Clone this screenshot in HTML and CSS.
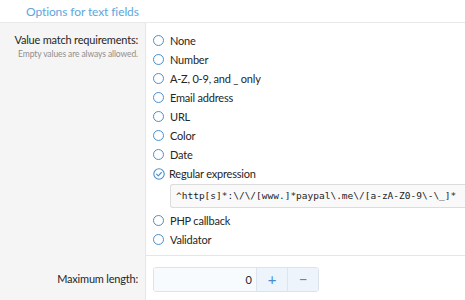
FILE: index.html
```html
<!DOCTYPE html>
<html>
<head>
<meta charset="utf-8">
<link rel="stylesheet" href="styles.css">
</head>
<body>
<div class="page">
  <h3 class="block-header">Options for text fields</h3>
  <div class="form-row">
    <div class="row-label">
      <div class="label">Value match requirements:</div>
      <div class="hint">Empty values are always allowed.</div>
    </div>
    <div class="row-input">
      <ul class="choices">
        <li class="choice"><span class="radio"></span>None</li>
        <li class="choice"><span class="radio"></span>Number</li>
        <li class="choice"><span class="radio"></span>A-Z, 0-9, and _ only</li>
        <li class="choice"><span class="radio"></span>Email address</li>
        <li class="choice"><span class="radio"></span>URL</li>
        <li class="choice"><span class="radio"></span>Color</li>
        <li class="choice"><span class="radio"></span>Date</li>
        <li class="choice"><span class="radio checked"><svg viewBox="0 0 12 12" width="12" height="12"><circle cx="6" cy="6" r="5.2" fill="none" stroke="#4a90d0" stroke-width="1.1"/><path d="M3.6 6.2 L5.3 7.8 L8.4 4.5" fill="none" stroke="#4a90d0" stroke-width="1.1" stroke-linecap="round" stroke-linejoin="round"/></svg></span>Regular expression</li>
        <li class="sub"><div class="code-input">^http[s]*:\/\/[www.]*paypal\.me\/[a-zA-Z0-9\-\_]*</div></li>
        <li class="choice"><span class="radio"></span>PHP callback</li>
        <li class="choice"><span class="radio"></span>Validator</li>
      </ul>
    </div>
  </div>
  <div class="form-row sep">
    <div class="row-label">
      <div class="label">Maximum length:</div>
    </div>
    <div class="row-input">
      <div class="spinbox">
        <div class="spin-value">0</div>
        <div class="spin-btn">+</div>
        <div class="spin-btn">−</div>
      </div>
    </div>
  </div>
</div>
</body>
</html>
```

FILE: styles.css
```css
html, body {
  margin: 0;
  padding: 0;
  background: #fff;
}
body {
  font-family: "Lato", "Noto Sans", sans-serif;
  color: #222;
  width: 465px;
  height: 300px;
  overflow: hidden;
}
.page {
  display: flex;
  flex-direction: column;
}
.block-header {
  margin: 0;
  height: 23px;
  box-sizing: border-box;
  padding: 3px 0 0 26px;
  font-size: 12px;
  letter-spacing: -0.1px;
  font-weight: normal;
  color: #5ea6dd;
  border-bottom: 1px solid #e9e9e9;
  line-height: 18px;
}
.form-row {
  display: flex;
}
.row-label {
  width: 146px;
  flex: none;
  background: #f5f5f5;
  border-right: 1px solid #e6e6e6;
  box-sizing: border-box;
  padding: 9px 7px 0 0;
  text-align: right;
  white-space: nowrap;
}
.label {
  font-size: 11px;
  letter-spacing: -0.2px;
  line-height: 16px;
  color: #262626;
}
.hint {
  font-size: 8.5px;
  letter-spacing: -0.1px;
  line-height: 12px;
  color: #8e8e8e;
}
.row-input {
  flex: 1;
  min-width: 0;
  padding: 8px 0 6px 7px;
}
.choices {
  list-style: none;
  margin: 0;
  padding: 0;
}
.choice {
  display: flex;
  align-items: center;
  height: 19px;
  font-size: 11px;
  letter-spacing: -0.2px;
  color: #262626;
  white-space: nowrap;
}
.radio {
  width: 9px;
  height: 9px;
  border: 1.2px solid #4a90d0;
  border-radius: 50%;
  margin-right: 6px;
  flex: none;
}
.radio.checked {
  border: none;
  width: 12px;
  height: 12px;
  margin-left: -0.5px;
  margin-right: 4.5px;
  display: flex;
}
.sub {
  padding: 1px 0 3px 17px;
}
.code-input {
  height: 24px;
  box-sizing: border-box;
  border: 1px solid #dcdcdc;
  border-right: none;
  border-radius: 3px 0 0 3px;
  background: #f9f9f9;
  font-family: "DejaVu Sans Mono", "Liberation Mono", monospace;
  font-size: 9.5px;
  line-height: 22px;
  padding-left: 5px;
  white-space: nowrap;
  overflow: hidden;
  color: #1d1d1d;
}
.sep .row-input {
  border-top: 1px solid #e6e6e6;
  padding: 11px 0 12px 7px;
}
.sep .row-label {
  padding-top: 16px;
}
.spinbox {
  display: flex;
  width: 166px;
  height: 25px;
  border: 1px solid #dde3ea;
  border-radius: 3px;
  overflow: hidden;
  box-sizing: border-box;
}
.spin-value {
  flex: 1;
  background: #f8fbfe;
  text-align: right;
  font-size: 11px;
  line-height: 23px;
  padding-right: 4px;
  color: #262626;
}
.spin-btn {
  width: 30px;
  background: #eef4fb;
  border-left: 1px solid #dde6f0;
  color: #3f8fd6;
  font-size: 15px;
  line-height: 22px;
  text-align: center;
}
```
